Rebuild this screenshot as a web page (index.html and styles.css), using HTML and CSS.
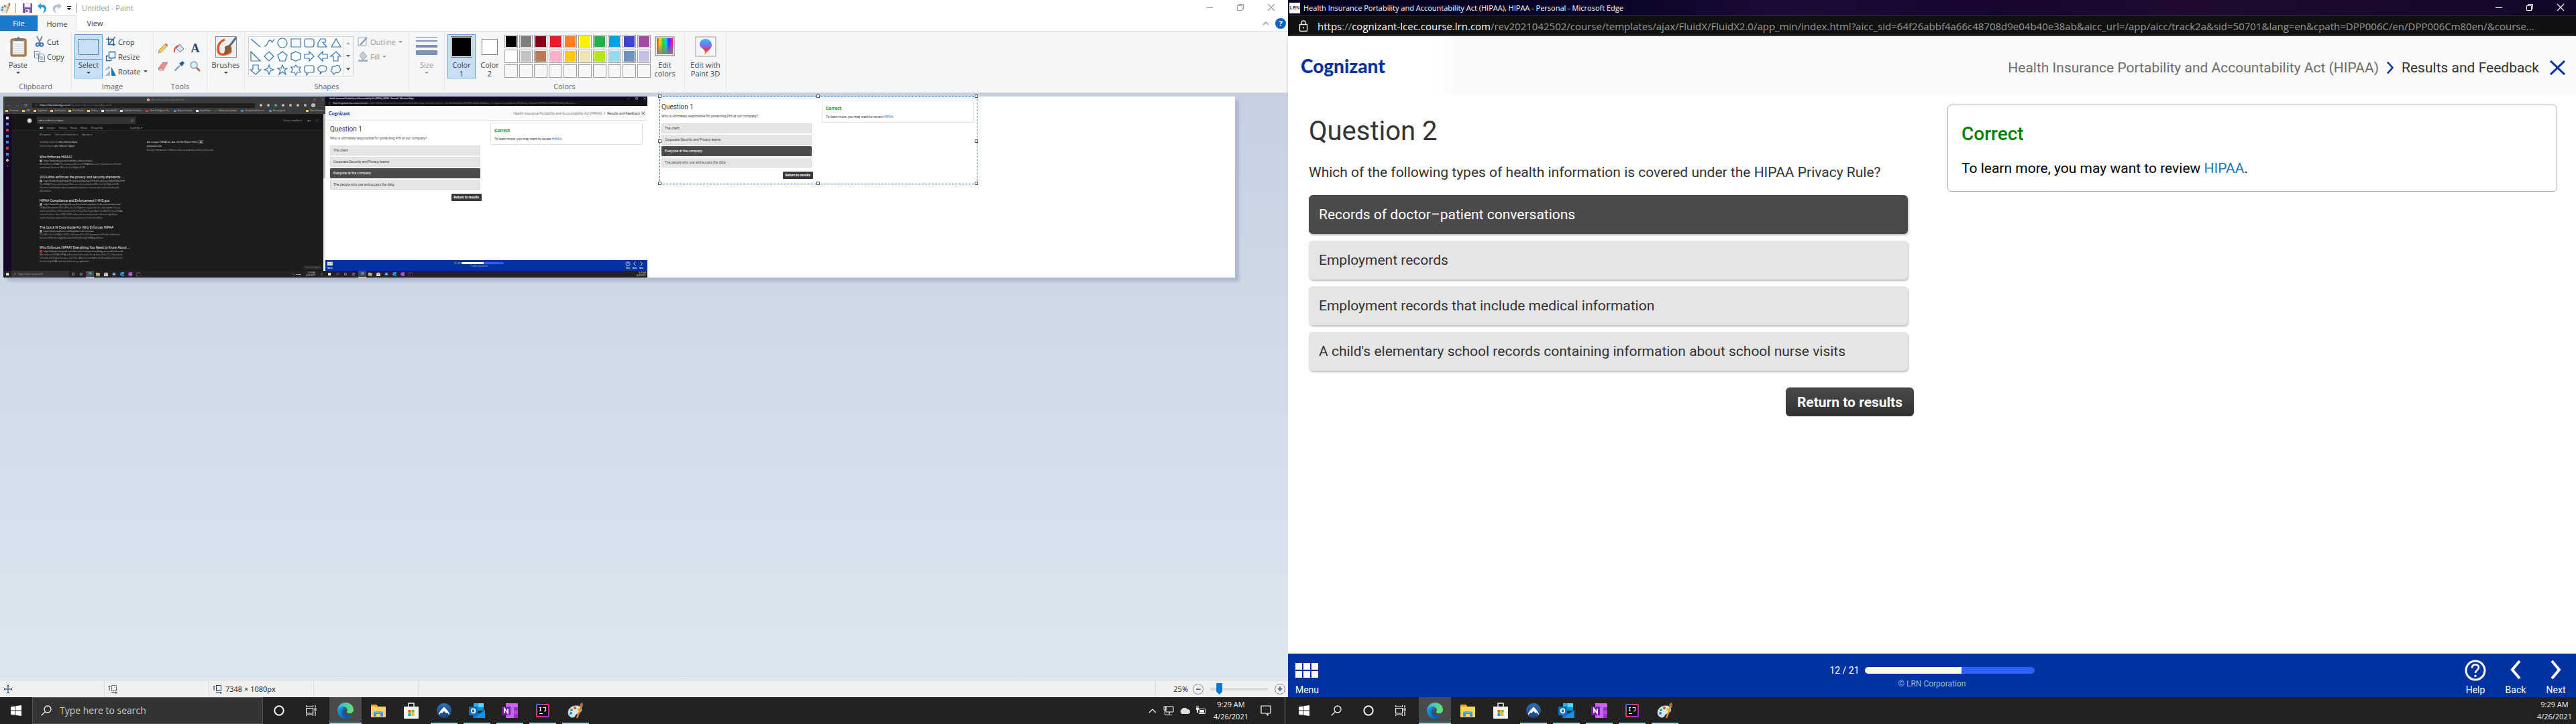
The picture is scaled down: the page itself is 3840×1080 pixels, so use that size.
FILE: index.html
```html
<!DOCTYPE html>
<html lang="en">
<head>
<meta charset="utf-8">
<title>Desktop</title>
<link rel="stylesheet" href="styles.css">
</head>
<body>
<svg class="defs" width="0" height="0" aria-hidden="true">
  <defs>
    <linearGradient id="gEdge" x1="0" y1="0" x2="1" y2="1"><stop offset="0" stop-color="#1b9de2"/><stop offset="1" stop-color="#0c59a4"/></linearGradient>
    <linearGradient id="gEdgeTop" x1="0" y1="0" x2="1" y2="0"><stop offset="0" stop-color="#2ab5ec"/><stop offset="1" stop-color="#66e36a"/></linearGradient>
    <linearGradient id="gRain" x1="0" y1="0" x2="1" y2="0"><stop offset="0" stop-color="#f22"/><stop offset=".2" stop-color="#fd0"/><stop offset=".4" stop-color="#1d2"/><stop offset=".58" stop-color="#0dd"/><stop offset=".75" stop-color="#33f"/><stop offset=".9" stop-color="#e0f"/><stop offset="1" stop-color="#f24"/></linearGradient>
    <linearGradient id="gFade" x1="0" y1="0" x2="0" y2="1"><stop offset=".3" stop-color="#808080" stop-opacity="0"/><stop offset="1" stop-color="#808080"/></linearGradient>
    <linearGradient id="gPin" x1="0" y1="0" x2="0" y2="1"><stop offset="0" stop-color="#1cf"/><stop offset=".45" stop-color="#86e"/><stop offset=".7" stop-color="#e35"/><stop offset="1" stop-color="#fc2"/></linearGradient>
    <linearGradient id="gIj" x1="0" y1="0" x2="1" y2="1"><stop offset="0" stop-color="#1a7cf0"/><stop offset=".45" stop-color="#f5325b"/><stop offset="1" stop-color="#6a3fe0"/></linearGradient>
    <linearGradient id="gNord" x1="0" y1="0" x2="0" y2="1"><stop offset="0" stop-color="#2a6fb5"/><stop offset="1" stop-color="#1d4278"/></linearGradient>
  </defs>
  <symbol id="win" viewBox="0 0 16 16"><path fill="#fff" d="M0 2.3l6.5-.9v6.2H0zM7.3 1.3L16 0v7.6H7.3zM0 8.4h6.5v6.2L0 13.7zM7.3 8.4H16V16l-8.7-1.2z"/></symbol>
  <symbol id="search" viewBox="0 0 16 16"><g fill="none" stroke="currentColor" stroke-width="1.3"><circle cx="10" cy="6" r="5"/><path d="M6.4 9.6L.8 15.2"/></g></symbol>
  <symbol id="cortana" viewBox="0 0 16 16"><circle cx="8" cy="8" r="6.7" fill="none" stroke="#f2f2f2" stroke-width="2"/></symbol>
  <symbol id="taskview" viewBox="0 0 16 16"><g fill="none" stroke="#f2f2f2" stroke-width="1.2"><path d="M.6 4.5h10v7.5H.6zM.6 0v2h10V0M.6 16v-2h10v2M14 0v3.5M14 9v7"/><path d="M13 5h2v2.5h-2z"/></g></symbol>
  <symbol id="edge" viewBox="0 0 24 24"><path fill="url(#gEdge)" d="M0 12C0 20 6 24 12.500 24c4 0 7-1.500 8.800-4.200-5 2.300-11.800-.4-11.800-5.300 0-2.300 1.300-3.900 3-4.700C6 4 0 7.500 0 12z"/><path fill="#0d5cab" d="M8 9.500C5 13 6.500 21 12.500 24c4 0 7-1.500 8.800-4.200.3-.6-.2-1-.8-.7-5 1.500-11-.4-11-5 0-1.500.5-3 2-4z"/><path fill="url(#gEdgeTop)" d="M0 12C.5 5 5.500 0 12 0c7.500 0 12 5.500 12 10.200 0 4-3 6.100-6 6.100-3.500 0-4.500-1.300-4-2.200 1.600-2 1-7.600-5.500-7.600C4.500 6.500 1 8.500 0 12z"/></symbol>
  <symbol id="folder" viewBox="0 0 24 24"><path fill="#e8a519" d="M1 3h8l2 2v4H1z"/><path fill="#ffd45e" d="M1 6h22v16H1z"/><path fill="#3f96dc" d="M5 13h14v8h-4v-4H9v4H5z"/><path fill="#69b8f0" d="M5 13h14v2H5z"/></symbol>
  <symbol id="store" viewBox="0 0 24 24"><path d="M8 7V1h8v6" fill="none" stroke="#eee" stroke-width="1.500"/><path fill="#f4f4f4" d="M1 6h22v17q0 1-1 1H2q-1 0-1-1z"/><path fill="#f25022" d="M7.500 11h4v4h-4z"/><path fill="#7fba00" d="M12.500 11h4v4h-4z"/><path fill="#00a4ef" d="M7.500 16h4v4h-4z"/><path fill="#ffb900" d="M12.500 16h4v4h-4z"/></symbol>
  <symbol id="nord" viewBox="0 0 24 24"><circle cx="12" cy="12" r="11" fill="url(#gNord)"/><path fill="#fff" d="M4 18.500C3.500 16 7 11 12 6.500c5 4.500 8.500 9.500 8 12L16.500 15l-1.500 1-3-3.500L9 16l-1.500-1z"/></symbol>
  <symbol id="outlook" viewBox="0 0 24 24"><path fill="#1490df" d="M7 1h15v11H7z"/><path fill="#28a8ea" d="M7 1h7v6H7z"/><path fill="#50d9ff" d="M14 1h8v6h-8z"/><path fill="#0f6fc0" d="M6 11l9 5 9-5v11q0 1-1 1H6z"/><path fill="#1f8fdc" d="M7 23l17-11v10q0 1-1 1z"/><rect y="6" width="13" height="13" rx="1" fill="#0a6fc2"/><ellipse cx="6.500" cy="12.500" rx="2.800" ry="3.200" fill="none" stroke="#fff" stroke-width="1.800"/></symbol>
  <symbol id="onenote" viewBox="0 0 24 24"><path fill="#ca64ea" d="M6 1h16q2 0 2 2v18q0 2-2 2H6z"/><path fill="#9332bf" d="M18 7h6v5h-6zM18 17h6v4q0 2-2 2h-4z"/><path fill="#ae4bd5" d="M18 12h6v5h-6z"/><rect y="6" width="13" height="13" rx="1" fill="#7719aa"/><path d="M4 16V9l5 7V9" fill="none" stroke="#fff" stroke-width="1.700"/></symbol>
  <symbol id="ij" viewBox="0 0 24 24"><rect x="2" y="2" width="20" height="20" rx="2" fill="url(#gIj)"/><path fill="#0b0b0d" d="M4 4h16v16H4z"/><path d="M7 7.500h3M8.500 7.500v5M7 12.500h3M12.500 7.500h4v4q0 1.300-2.500 1.200M7 16.500h5" fill="none" stroke="#fff" stroke-width="1.200"/></symbol>
  <symbol id="palette" viewBox="0 0 24 24"><path fill="#d3e8f3" stroke="#88a9bb" stroke-width=".6" d="M10 5C4 6 0 11 1 17c1 4 5 6 8 5 3-.9 2-3 4-4.500S22 15 21 10s-6-6-11-5z"/><circle cx="6" cy="11" r="2" fill="#3ba54a"/><circle cx="11" cy="8" r="2" fill="#e2442f"/><circle cx="5" cy="16" r="2" fill="#2e7fd1"/><circle cx="16" cy="10" r="2" fill="#f2c11c"/><path stroke="#e08a2c" stroke-width="2.400" d="M21 5l-7 18"/><path fill="#a8714a" d="M18 5q0-4 4-5 2 3 0 7z"/></symbol>
  <symbol id="wmin" viewBox="0 0 12 12"><path d="M1 6.500h10" stroke="currentColor"/></symbol>
  <symbol id="wmax" viewBox="0 0 12 12"><path d="M1.500 3.500h7v7h-7zM3.500 3.500v-2h7v7h-2" fill="none" stroke="currentColor"/></symbol>
  <symbol id="wclose" viewBox="0 0 12 12"><path d="M1 1l10 10M11 1L1 11" stroke="currentColor" stroke-width="1.100"/></symbol>
  <symbol id="lock" viewBox="0 0 14 18"><path d="M1.500 6.500h11v9q0 1-1 1h-9q-1 0-1-1zM4 6.500V4q0-3 3-3t3 3v2.500" fill="none" stroke="currentColor" stroke-width="1.300"/><circle cx="7" cy="11.500" r="1.100" fill="currentColor"/></symbol>
  <symbol id="chevr" viewBox="0 0 12 20"><path d="M2 1.500L9.500 10 2 18.500" fill="none" stroke="currentColor" stroke-width="2.600"/></symbol>
  <symbol id="chevl" viewBox="0 0 12 20"><path d="M10 1.500L2.500 10 10 18.500" fill="none" stroke="currentColor" stroke-width="2.600"/></symbol>
  <symbol id="cross" viewBox="0 0 24 22"><path d="M1.500 1l21 20M22.500 1l-21 20" stroke="currentColor" stroke-width="3"/></symbol>
  <symbol id="apps" viewBox="0 0 35 23"><path fill="#fff" d="M0 0h10v10H0zM12 0h10v10H12zM24 0h10v10H24zM0 12h10v10H0zM12 12h10v10H12zM24 12h10v10H24z"/></symbol>
  <symbol id="help" viewBox="0 0 32 32"><circle cx="16" cy="16" r="14" fill="none" stroke="#fff" stroke-width="3"/><path d="M11 12.500q0-5 5-5t5 4.500c0 3.500-5 3.500-5 8" fill="none" stroke="#fff" stroke-width="2.600"/><circle cx="16" cy="24.300" r="1.700" fill="#fff"/></symbol>
</svg>

<main class="desktop">
<section class="monitor">
  <header class="p-title">
    <svg class="i16" viewBox="0 0 24 24"><use href="#palette"/></svg><i class="bar"></i>
    <svg class="i16 save" viewBox="0 0 16 16"><path fill="#7d55a8" d="M1 1h14v14H1z"/><path fill="#eef" d="M3.500 1h9v6h-9zM5 10h6v5H5z"/><path fill="#7d55a8" d="M6 11h2v3H6z"/></svg>
    <svg class="i16" viewBox="0 0 16 16"><path fill="#2c9fe0" d="M1 5l5-4.500V3c6-.5 9 3 8 7.500-.5 2.500-3 4.500-6 5 2.500-2 3.500-4 3-6C10.500 7.500 9 6.500 6 7v3z"/></svg>
    <svg class="i16" viewBox="0 0 16 16"><path fill="#b4c1d2" d="M15 5l-5-4.500V3C4 2.500 1 6 2 10.500c.5 2.500 3 4.500 6 5-2.500-2-3.500-4-3-6C5.500 7.500 7 6.500 10 7v3z"/></svg>
    <svg class="i8" viewBox="0 0 8 8"><path d="M1 1h6v1H1zM1 4h6L4 7z"/></svg><i class="bar"></i>
    <span>Untitled - Paint</span>
    <div class="wbtns"><button aria-label="Minimize"><svg class="i12"><use href="#wmin"/></svg></button><button aria-label="Restore"><svg class="i12"><use href="#wmax"/></svg></button><button aria-label="Close"><svg class="i12"><use href="#wclose"/></svg></button></div>
  </header>
  <nav class="tabs">
    <button class="file">File</button><button class="home">Home</button><button class="view">View</button>
    <svg class="i12 collapse" viewBox="0 0 12 12"><path d="M2 8l4-4 4 4" fill="none" stroke="#999" stroke-width="1.500"/></svg>
    <span class="qhelp">?</span>
  </nav>
  <div class="ribbon">
    <section class="grp g-clip"><div class="row">
      <button class="big"><svg class="i32" viewBox="0 0 32 32"><rect x="5" y="4" width="23" height="26" rx="2" fill="#b9803f" stroke="#8a5f2d"/><path fill="#fff" stroke="#aaa" d="M8 7h17v20H8z"/><path d="M10 12h13M10 15h13M10 18h13M10 21h13M10 24h13" stroke="#b9c7dc"/><path fill="#777" d="M10 3h4q2-4 5 0h4v4H10z"/></svg><span>Paste</span><i class="dd"></i></button>
      <div class="col"><button><svg class="i16" viewBox="0 0 16 16"><path d="M4 0l5 10M12 0L7 10" stroke="#7b8896" stroke-width="1.800"/><g fill="none" stroke="#2b6fb3" stroke-width="1.800"><circle cx="5" cy="12.500" r="2.300"/><circle cx="11" cy="12.500" r="2.300"/></g></svg>Cut</button>
      <button><svg class="i16" viewBox="0 0 16 16"><path fill="#fff" stroke="#70808f" d="M.5.500h6l2 2v8h-8zM6.500 4.500h6l3 3v8h-9z"/><path d="M8 9h5M8 11h6M8 13h6M2 4h4M2 6h4" stroke="#6f9bd0"/></svg>Copy</button></div>
    </div><h2>Clipboard</h2></section>
    <section class="grp g-img"><div class="row">
      <button class="big split on"><span class="sel-top"><svg class="i32" viewBox="0 0 32 32"><rect x="1.500" y="4.500" width="29" height="23" fill="none" stroke="#1e5a96" stroke-dasharray="2 1"/></svg></span><span>Select</span><i class="dd"></i></button>
      <div class="col"><button><svg class="i16" viewBox="0 0 16 16"><path d="M4.500 1v11.500H15M1 4.500h11.500V15M12 4l3-3M6 11l5-6" fill="none" stroke="#2b6190" stroke-width="1.300"/></svg>Crop</button>
      <button><svg class="i16" viewBox="0 0 16 16"><path d="M5.500 1.500h9v9h-9zM5.500 7.500h-4v7h7v-4" fill="none" stroke="#2b6190" stroke-width="1.300"/></svg>Resize</button>
      <button><svg class="i16" viewBox="0 0 16 16"><path fill="#a8b5c4" d="M0 15h7V7z"/><path fill="#1f73b8" d="M9 2v13h7z"/><path d="M1 7q0-4 5-4M4 .500L6.500 3 4 5.500" fill="none" stroke="#2b84c8"/></svg>Rotate<i class="dd"></i></button></div>
    </div><h2>Image</h2></section>
    <section class="grp g-tools"><div class="tools">
      <svg class="i16" viewBox="0 0 16 16"><path fill="#f5cf58" stroke="#8b6b2f" stroke-width=".7" d="M1 15l1.500-4.500L12 1l3 3-9.500 9.500z"/><path fill="#c96a55" d="M11 2l1.500-1.500 3 3L14 5z"/></svg>
      <svg class="i16" viewBox="0 0 16 16"><path fill="#d5e3f0" stroke="#5c7895" d="M9 2l6 7-6 5-5-6z"/><path d="M1 14q-1-7 6-10" fill="none" stroke="#d9512c" stroke-width="2"/></svg>
      <b class="tool-a">A</b>
      <svg class="i16" viewBox="0 0 16 16"><path fill="#ee8f8c" stroke="#b45a5a" stroke-width=".7" d="M1 11l7-9h7l-6 10z"/><path fill="#f9c6c2" stroke="#b45a5a" stroke-width=".7" d="M1 11h8v3H2z"/></svg>
      <svg class="i16" viewBox="0 0 16 16"><path d="M1.500 14.500L9 7" stroke="#7d93a8" stroke-width="2"/><path fill="#1c5f9e" d="M8 4l5-4 3 3-4 5z"/></svg>
      <svg class="i16" viewBox="0 0 16 16"><circle cx="6" cy="6" r="5" fill="#d8ecfa" stroke="#8a9cae" stroke-width="1.400"/><path d="M10 10l5 5" stroke="#a36b4f" stroke-width="2.500"/></svg>
    </div><h2>Tools</h2></section>
    <section class="grp g-brush"><div class="row mid">
      <button class="big"><svg class="i32" viewBox="0 0 32 32"><rect x=".5" y=".5" width="31" height="31" fill="#eceff1" stroke="#8b8b8b"/><path d="M14 5Q4 9 4 19t10 8 9-6" fill="none" stroke="#e4542a" stroke-width="3.500"/><path d="M31 2L20 16" stroke="#556b80" stroke-width="3"/><path fill="#8c5a35" d="M22 13q5 6-1 11-5 4-9 3 3-5 2-9t8-5z"/></svg><span>Brushes</span><i class="dd"></i></button>
    </div></section>
    <section class="grp g-shapes"><div class="row">
      <div class="gallery"><svg width="140" height="58" viewBox="0 0 140 58" fill="none" stroke="#3273ab" stroke-width="1.200">
        <path d="M3 3l14 12M23 14c6 0 5-10 9-9s0 8 6-2"/><circle cx="50" cy="9" r="7"/><path d="M63 3h14v12H63z"/><rect x="83" y="3" width="14" height="12" rx="3"/><path d="M103 15V9l4-6h7v5h-4l6 7zM130 3l7 12h-14z"/>
        <path d="M3 22v14h14zM30 22l7 7-7 7-7-7zM50 22l7 5-3 9h-8l-3-9zM70 22l7 3v8l-7 3-7-3v-8zM83 26h7v-4l7 7-7 7v-4h-7zM117 26h-7v-4l-7 7 7 7v-4h7zM126 36v-7h-4l8-7 7 7h-4v7z"/>
        <path d="M6 42h8v7h4l-8 7-8-7h4zM30 42l2 5 5 2-5 2-2 5-2-5-5-2 5-2zM50 42l2 5h5l-4 3 2 6-5-4-5 4 2-6-4-3h5zM70 42l2 3h5l-2 4 2 4h-5l-2 4-2-4h-5l2-4-2-4h5z"/><path d="M85 43h10q2 0 2 2v6q0 2-2 2h-6l-3 4v-4h-1q-2 0-2-2v-6q0-2 2-2zM107 52q-5-2-4-5 2-5 8-4 6 1 5 5-1 5-7 4l-3 4zM125 53c-4-1-3-4-1-5-1-4 3-5 5-4 3-3 7-1 6 2 3 1 2 5 0 5 0 3-4 3-5 2l-4 3z"/>
      </svg><div class="gscroll"><i class="up"></i><i class="dd"></i><i class="dd more"></i></div></div>
      <div class="col off"><button><svg class="i16" viewBox="0 0 16 16"><path d="M1 2h12v12H1z" fill="none" stroke="#9daabb"/><path d="M4 13L14 2" stroke="#8d9db2" stroke-width="2.500"/></svg>Outline<i class="dd"></i></button><button><svg class="i16" viewBox="0 0 16 16"><path fill="#c4cdd9" stroke="#93a1b3" d="M8 1l6 7-6 5-5-6z"/><path fill="#a3b1c3" d="M1 13h14v3H1z"/></svg>Fill<i class="dd"></i></button></div>
    </div><h2>Shapes</h2></section>
    <section class="grp g-size"><div class="row mid">
      <button class="big off"><svg class="i32" viewBox="0 0 32 32" fill="#7f92b4"><path d="M0 1h32v1H0zM0 6h32v2H0zM0 13h32v4H0zM0 21h32v7H0z"/></svg><span>Size</span><i class="dd"></i></button>
    </div></section>
    <section class="grp g-colors"><div class="row">
      <button class="big on"><i class="sw c1"></i><span>Color<br>1</span></button>
      <button class="big"><i class="sw c2"></i><span>Color<br>2</span></button>
      <div class="pal"><i style="background:#000"></i><i style="background:#7f7f7f"></i><i style="background:#880015"></i><i style="background:#ed1c24"></i><i style="background:#ff7f27"></i><i style="background:#fff200"></i><i style="background:#22b14c"></i><i style="background:#00a2e8"></i><i style="background:#3f48cc"></i><i style="background:#a349a4"></i><i style="background:#fff"></i><i style="background:#c3c3c3"></i><i style="background:#b97a57"></i><i style="background:#ffaec9"></i><i style="background:#ffc90e"></i><i style="background:#efe4b0"></i><i style="background:#b5e61d"></i><i style="background:#99d9ea"></i><i style="background:#7092be"></i><i style="background:#c8bfe7"></i><i class="e"></i><i class="e"></i><i class="e"></i><i class="e"></i><i class="e"></i><i class="e"></i><i class="e"></i><i class="e"></i><i class="e"></i><i class="e"></i></div>
      <button class="big"><svg class="i32" viewBox="0 0 32 32"><rect x="2" y="1" width="28" height="28" fill="#fff" stroke="#999" stroke-width="1.500"/><path fill="url(#gRain)" d="M4 3h24v24H4z"/><path fill="url(#gFade)" d="M4 3h24v24H4z"/></svg><span>Edit<br>colors</span></button>
    </div><h2>Colors</h2></section>
    <section class="grp g-3d"><div class="row mid">
      <button class="big"><svg class="i32" viewBox="0 0 32 32"><rect x="1" y="1" width="30" height="29" fill="#f6f6f6" stroke="#bbb" stroke-width="1.500"/><path fill="url(#gPin)" d="M16 4c5 0 9 4 9 9 0 7-7 8-10 15-1-4 1-6-3-9-3-2-5-4-5-7 0-5 4-8 9-8z"/></svg><span>Edit with<br>Paint 3D</span></button>
    </div></section>
  </div>

  <div class="workspace">
    <div class="canvas">
      <!-- pasted capture: search results on the left screen -->
      <div class="shot s1">
        <div class="s1-title"><i class="duck"></i><span>who enforces hipaa at DuckDuckGo</span><div class="s-w"><svg><use href="#wmin"/></svg><svg><use href="#wmax"/></svg><svg><use href="#wclose"/></svg></div></div>
        <div class="s1-bar"><span>←</span><span>→</span><span>⟳</span><div class="s1-url"><svg><use href="#lock"/></svg><b>https://duckduckgo.com</b>/?q=who+inforces+hipaa&amp;ia=web</div><i class="d"></i><i class="d"></i><i class="d g"></i><i class="d"></i><i class="d"></i><i class="d"></i><i class="d"></i><i class="d big-d"></i><span>…</span></div>
        <div class="s1-marks"><span><i></i>Developer</span><span><i></i>GBS</span><span><i></i>Cognizant</span><span><i></i>GoatCopter</span><span><i></i>Bear Recipe</span><span><i></i>Homes</span><span><i class="w"></i>mojombo80</span><span><i class="w"></i>CodeGin: Front En...</span><span><i class="r"></i>How To Engineer Yo...</span><span><i class="b"></i>RxJava Contacts</span><span><i class="w"></i>GraphPaper</span><span><i class="k"></i>Online Java Compil...</span><span><i class="b"></i>Gravity Vault Reserv...</span><span><i class="b"></i>Managegrails</span><span class="last"><i></i>Other favorites</span></div>
        <div class="s1-body">
          <div class="s1-side"><i></i><i class="b"></i><i class="r"></i><i class="b"></i><i class="b"></i><i class="r"></i><i class="b"></i><i class="duck"></i><span>+</span></div>
          <div class="s1-page">
            <div class="s1-head"><i class="logo-d"></i><div class="s1-q"><span>who enforces hipaa</span><svg><use href="#search"/></svg></div><span class="priv">Privacy, simplified. ▾</span><span>◀▪ ▾</span><span>☰</span></div>
            <div class="s1-nav"><b>All</b><span>Images</span><span>Videos</span><span>News</span><span>Maps</span><span>Shopping</span><span class="set">Settings ▾</span></div>
            <div class="s1-filt"><span>All regions ▾</span><span>Safe search: moderate ▾</span><span>Any time ▾</span></div>
            <div class="s1-cols">
              <div class="s1-res">
                <p class="inc">Including results for <b>who enforces hipaa</b><br>Search only for <b>who "inforces" hipaa?</b></p>
                <h3>Who Enforces HIPAA?</h3><cite><i></i>https://www.hipaajournal.com/who-enforces-hipaa/</cite><p>Who Enforces HIPAA? The primary enforcer of HIPAA Rules is the Department of Health<br>and Human Services' Office for Civil Rights (OCR).</p>
                <h3>2019-Who enforces the privacy and security standards ...</h3><cite><i></i>https://www.hhs.gov/hipaa/for-professionals/faq/2019/who-enforces-hipaa/index.html</cite><p>The HIPAA Privacy and Security Rules are enforced by the Office for Civil Rights (OCR).<br>View more information about complaints related to concerns about protected health<br>information.</p>
                <h3>HIPAA Compliance and Enforcement | HHS.gov</h3><cite><i></i>https://www.hhs.gov/hipaa/for-professionals/compliance-enforcement/index.html</cite><p>HIPAA Enforcement. HHS' Office for Civil Rights is responsible for enforcing the Privacy<br>and Security Rules. Enforcement of the Privacy Rule began April 14, 2003 for most HIPAA<br>covered entities. Since 2003, OCR's enforcement activities have obtained significant<br>results that have improved the privacy practices of covered entities.</p>
                <h3>The Quick N' Easy Guide For Who Enforces HIPAA</h3><cite><i></i>https://www.easyllama.com/blog/who-enforces-hipaa</cite><p>The Office for Civil Rights (OCR), a division of the US Department of Health and Human<br>Services (HHS) was originally tasked with enforcing HIPAA guidelines.</p>
                <h3>Who Enforces HIPAA? Everything You Need to Know About ...</h3><cite><i class="r"></i>https://hipaasecuritysuite.com/who-enforces-hipaa-everything-you-need-to-know-ab...</cite><p>Who Enforces HIPAA? HIPAA enforcement falls under the domain of the U.S. Department<br>of Health and Human Services. The HHS' Office for Civil Rights (OCR) handles the process<br>of enforcing HIPAA's privacy and security regulations.</p>
              </div>
              <div class="s1-ad"><b>Ask a Lawyer: HIPAA Law - Ask a Verified Expert Online. <small>AD</small></b><b>justanswer.com</b><span>A Lawyer Will Answer in Minutes! Questions Answered Every 9 Seconds.</span></div>
            </div>
            <span class="share">Share Feedback</span>
          </div>
          <i class="s1-sb"></i>
        </div>
        <div class="s-task"><svg><use href="#win"/></svg><div class="s-find"><svg><use href="#search"/></svg>Type here to search</div><svg><use href="#cortana"/></svg><svg><use href="#taskview"/></svg><svg class="m on"><use href="#edge"/></svg><svg class="m"><use href="#folder"/></svg><svg class="m"><use href="#store"/></svg><svg class="m"><use href="#nord"/></svg><svg class="m"><use href="#outlook"/></svg><svg class="m"><use href="#onenote"/></svg><svg class="m"><use href="#ij"/></svg><span class="s-tray">^ ▭ ☁ ▬</span><span class="s-clock">9:29 AM<br>4/26/2021</span><span class="s-note">▢</span></div>
      </div>
      <!-- pasted capture: course window on the right screen -->
      <div class="shot s2">
        <div class="s2-title">Health Insurance Portability and Accountability Act (HIPAA), HIPAA - Personal - Microsoft Edge<div class="s-w"><svg><use href="#wmin"/></svg><svg><use href="#wmax"/></svg><svg><use href="#wclose"/></svg></div></div>
        <div class="s2-url"><svg><use href="#lock"/></svg><b>https://cognizant-lcec.course.lrn.com</b>/rev2021042502/course/templates/ajax/FluidX/FluidX2.0/app_min/index.html?aicc_sid=64f26abbf4a66c48708d9e04b40e38ab&amp;aicc_url=/app/aicc/track2a&amp;sid=50701&amp;lang=en&amp;cpath=DPP006C/en/DPP006Cm80en/&amp;course...</div>
        <div class="s2-head"><b>Cognizant</b><span class="crumb">Health Insurance Portability and Accountability Act (HIPAA)</span><svg><use href="#chevr"/></svg><span>Results and Feedback</span><svg class="x"><use href="#cross"/></svg></div>
        <div class="mini">
          <div class="mini-q"><h3>Question 1</h3><p>Who is ultimately responsible for protecting PHI at our company?</p><div class="a">The client</div><div class="a">Corporate Security and Privacy teams</div><div class="a sel">Everyone at the company</div><div class="a">The people who use and access the data</div><div class="r">Return to results</div></div>
          <div class="mini-f"><h4>Correct</h4><p>To learn more, you may want to review <span>HIPAA</span>.</p></div>
        </div>
        <div class="s2-foot"><div class="f1"><svg><use href="#apps"/></svg>Menu</div><div class="f2"><div>11 / 21<i></i></div><span>© LRN Corporation</span></div><div class="f1"><svg><use href="#help"/></svg>Help</div><div class="f1"><svg><use href="#chevl"/></svg>Back</div><div class="f1"><svg><use href="#chevr"/></svg>Next</div></div>
        <div class="s-task"><svg><use href="#win"/></svg><svg><use href="#search"/></svg><svg><use href="#cortana"/></svg><svg><use href="#taskview"/></svg><svg class="m on"><use href="#edge"/></svg><svg class="m"><use href="#folder"/></svg><svg class="m"><use href="#store"/></svg><svg class="m"><use href="#nord"/></svg><svg class="m"><use href="#outlook"/></svg><svg class="m"><use href="#onenote"/></svg><svg class="m"><use href="#ij"/></svg><span class="s-clock end">9:29 AM<br>4/26/2021</span></div>
      </div>
      <div class="selection">
        <div class="mini">
          <div class="mini-q"><h3>Question 1</h3><p>Who is ultimately responsible for protecting PHI at our company?</p><div class="a">The client</div><div class="a">Corporate Security and Privacy teams</div><div class="a sel">Everyone at the company</div><div class="a">The people who use and access the data</div><div class="r">Return to results</div></div>
          <div class="mini-f"><h4>Correct</h4><p>To learn more, you may want to review <span>HIPAA</span>.</p></div>
        </div>
        <i class="h h1"></i><i class="h h2"></i><i class="h h3"></i><i class="h h4"></i><i class="h h5"></i><i class="h h6"></i><i class="h h7"></i><i class="h h8"></i>
      </div>
    </div>
  </div>

  <footer class="status">
    <div class="cell"><svg class="i14" viewBox="0 0 14 14"><path d="M7 1v12M1 7h12M5 3l2-2 2 2M5 11l2 2 2-2M3 5L1 7l2 2M11 5l2 2-2 2" fill="none" stroke="#1f3a5f"/></svg></div>
    <div class="cell"><svg class="i14" viewBox="0 0 14 14"><path d="M2 2v7M.500 3.500L2 2l1.500 1.500M5 12.500h8M11.500 11l1.500 1.500-1.500 1.500" fill="none" stroke="#1f3a5f"/><path d="M5.500 1.500h7v8h-7z" fill="none" stroke="#1f3a5f" stroke-dasharray="2 1"/></svg></div>
    <div class="cell"><svg class="i14" viewBox="0 0 14 14"><path d="M2 2v7M.500 3.500L2 2l1.500 1.500M5 12.500h8M11.500 11l1.500 1.500-1.500 1.500M5.500 1.500h7v8h-7z" fill="none" stroke="#1f3a5f"/></svg>7348 × 1080px</div>
    <div class="cell"></div>
    <div class="zoom"><label for="zoom">25%</label><button aria-label="Zoom out">−</button><input id="zoom" type="range" min="0" max="100" value="12"><button aria-label="Zoom in">+</button></div>
  </footer>
  <div class="taskbar">
    <button class="t" aria-label="Start"><svg class="i16"><use href="#win"/></svg></button>
    <label class="find"><svg class="i16"><use href="#search"/></svg><input type="text" placeholder="Type here to search" aria-label="Search"></label>
    <button class="t" aria-label="Cortana"><svg class="i16"><use href="#cortana"/></svg></button>
    <button class="t" aria-label="Task view"><svg class="i16"><use href="#taskview"/></svg></button>
    <div class="run"><button class="t on" aria-label="Edge"><svg class="i24"><use href="#edge"/></svg></button><button class="t" aria-label="Explorer"><svg class="i24"><use href="#folder"/></svg></button><button class="t" aria-label="Store"><svg class="i24"><use href="#store"/></svg></button><button class="t open" aria-label="NordVPN"><svg class="i24"><use href="#nord"/></svg></button><button class="t open" aria-label="Outlook"><svg class="i24"><use href="#outlook"/></svg></button><button class="t open" aria-label="OneNote"><svg class="i24"><use href="#onenote"/></svg></button><button class="t open" aria-label="IntelliJ"><svg class="i24"><use href="#ij"/></svg></button><button class="t open" aria-label="Paint"><svg class="i24"><use href="#palette"/></svg></button></div>
    <div class="tray">
      <svg class="i16" viewBox="0 0 16 16"><path d="M3 11l5-5 5 5" fill="none" stroke="#fff" stroke-width="1.200"/></svg>
      <svg class="i16" viewBox="0 0 16 16"><path d="M4 2h11v8H4zM9 10v4M6 14.500h7M1 2v5h3v-5zM2.500 7v7h3" fill="none" stroke="#fff"/></svg>
      <svg class="i16" viewBox="0 0 16 16"><path fill="#ddd" d="M4 13a4 4 0 01-.5-7A5 5 0 0112 6a3.500 3.500 0 011 7z"/></svg>
      <svg class="i16" viewBox="0 0 16 16"><path d="M5.500 5.500h9v7h-9zM2 1v3M4 1v3" fill="none" stroke="#fff"/><path fill="#fff" d="M7 7h6v4H7zM1 4h4v3H1zM2 7h2v4H2z"/></svg>
    </div>
    <div class="clock">9:29 AM<br>4/26/2021</div>
    <svg class="i16 note" viewBox="0 0 16 16"><path d="M1 1h14v11h-4v3l-3-3H1z" fill="none" stroke="#fff" stroke-width="1.200"/></svg>
    <i class="edge-line"></i>
  </div>
</section>

<section class="monitor">
  <header class="e-title"><b class="fav">LRN</b><span>Health Insurance Portability and Accountability Act (HIPAA), HIPAA - Personal - Microsoft Edge</span>
    <div class="wbtns"><button aria-label="Minimize"><svg class="i12"><use href="#wmin"/></svg></button><button aria-label="Restore"><svg class="i12"><use href="#wmax"/></svg></button><button aria-label="Close"><svg class="i12"><use href="#wclose"/></svg></button></div></header>
  <div class="e-url"><svg width="14" height="18"><use href="#lock"/></svg><div><b>https</b>://<b>cognizant-lcec.course.lrn.com</b>/rev2021042502/course/templates/ajax/FluidX/FluidX2.0/app_min/index.html?aicc_sid=64f26abbf4a66c48708d9e04b40e38ab&amp;aicc_url=/app/aicc/track2a&amp;sid=50701&amp;lang=en&amp;cpath=DPP006C/en/DPP006Cm80en/&amp;course...</div></div>
  <div class="c-head"><strong>Cognizant</strong><nav><a href="#">Health Insurance Portability and Accountability Act (HIPAA)</a><svg width="12" height="20"><use href="#chevr"/></svg><span>Results and Feedback</span><button aria-label="Exit"><svg width="25" height="22"><use href="#cross"/></svg></button></nav></div>
  <div class="c-main">
    <div class="quiz"><h1>Question 2</h1><p>Which of the following types of health information is covered under the HIPAA Privacy Rule?</p>
      <button class="ans sel">Records of doctor–patient conversations</button><button class="ans">Employment records</button><button class="ans">Employment records that include medical information</button><button class="ans">A child's elementary school records containing information about school nurse visits</button>
      <button class="ret">Return to results</button></div>
    <aside class="fb"><h2>Correct</h2><p>To learn more, you may want to review <a href="#">HIPAA</a>.</p></aside>
  </div>
  <footer class="c-foot">
    <button class="menu"><svg width="35" height="23"><use href="#apps"/></svg>Menu</button>
    <div class="prog"><div><span>12 / 21</span><i class="track"><i style="width:57%"></i></i></div><small>© LRN Corporation</small></div>
    <div class="navs"><button><svg width="32" height="32"><use href="#help"/></svg>Help</button><button><svg width="20" height="30" viewBox="0 0 20 30"><path d="M16 2L5 15l11 13" fill="none" stroke="#fff" stroke-width="4"/></svg>Back</button><button><svg width="20" height="30" viewBox="0 0 20 30"><path d="M4 2l11 13L4 28" fill="none" stroke="#fff" stroke-width="4"/></svg>Next</button></div>
  </footer>
  <div class="taskbar">
    <button class="t" aria-label="Start"><svg class="i16"><use href="#win"/></svg></button>
    <button class="t" aria-label="Search"><svg class="i16"><use href="#search"/></svg></button>
    <button class="t" aria-label="Cortana"><svg class="i16"><use href="#cortana"/></svg></button>
    <button class="t" aria-label="Task view"><svg class="i16"><use href="#taskview"/></svg></button>
    <div class="run"><button class="t on" aria-label="Edge"><svg class="i24"><use href="#edge"/></svg></button><button class="t" aria-label="Explorer"><svg class="i24"><use href="#folder"/></svg></button><button class="t" aria-label="Store"><svg class="i24"><use href="#store"/></svg></button><button class="t open" aria-label="NordVPN"><svg class="i24"><use href="#nord"/></svg></button><button class="t open" aria-label="Outlook"><svg class="i24"><use href="#outlook"/></svg></button><button class="t open" aria-label="OneNote"><svg class="i24"><use href="#onenote"/></svg></button><button class="t open" aria-label="IntelliJ"><svg class="i24"><use href="#ij"/></svg></button><button class="t open" aria-label="Paint"><svg class="i24"><use href="#palette"/></svg></button></div>
    <div class="clock end">9:29 AM<br>4/26/2021</div>
  </div>
</section>
</main>
</body>
</html>
```
FILE: styles.css
```css
* { box-sizing: border-box; }
body { margin: 0; font: 11px/13px "Open Sans", "Noto Sans", sans-serif; color: #3c3c3c; }
h1, h2, h3, h4, p { margin: 0; font-weight: 400; }
button { border: 0; padding: 0; margin: 0; background: none; font: inherit; color: inherit; }
svg { display: block; flex: none; }
i { font-style: normal; }
.defs { position: absolute; }
.i8 { width: 8px; height: 8px; }
.i12 { width: 12px; height: 12px; }
.i14 { width: 14px; height: 14px; }
.i16 { width: 16px; height: 16px; }
.i24 { width: 24px; height: 24px; }
.i32 { width: 32px; height: 32px; }

.desktop { display: grid; grid-template-columns: 1fr 1fr; min-height: 100vh; }
.monitor { display: flex; flex-direction: column; min-width: 0; }

/* Paint: title bar and tabs */
.p-title { display: flex; align-items: center; gap: 6px; height: 23px; background: #fff; color: #999; }
.p-title .bar { width: 1px; height: 14px; background: #999; margin: 0 1px; }
.p-title .save { margin-left: 2px; }
.wbtns { display: flex; margin-left: auto; height: 23px; }
.wbtns button { width: 46px; display: flex; justify-content: center; align-items: center; padding-bottom: 2px; }
.p-title .wbtns { margin-right: 2px; }
.tabs { display: flex; height: 24px; background: #fff; border-bottom: 1px solid #dadbdc; align-items: center; }
.tabs button { height: 23px; }
.tabs .file { width: 56px; background: #1979ca; color: #fff; }
.tabs .home { width: 58px; height: 24px; background: #f5f6f7; border: 1px solid #dadbdc; border-bottom: 0; align-self: flex-start; }
.tabs .view { width: 55px; }
.collapse { margin-left: auto; }
.qhelp { width: 16px; height: 16px; margin: 0 3px 0 8px; border-radius: 8px; background: #0a64c0; color: #fff; font-weight: 700; text-align: center; line-height: 16px; }

/* Ribbon */
.ribbon { display: flex; height: 92px; padding: 2px 0 3px; background: #f5f6f7; border-bottom: 1px solid #d2d4d8; }
.grp { display: flex; flex-direction: column; justify-content: space-between; border-right: 1px solid #e2e3e4; padding-top: 2px; }
.grp h2 { font-size: 11px; line-height: 12px; text-align: center; color: #666; }
.row { display: flex; height: 66px; }
.mid { justify-content: center; }
.big { display: flex; flex-direction: column; align-items: center; padding-top: 3px; width: 42px; }
.big > span:not(.sel-top) { margin-top: 4px; white-space: nowrap; }
.big .dd { margin-top: 4px; }
.big.on { background: #c9dff5; outline: 1px solid #62a2e4; outline-offset: -1px; }
.split { padding-top: 0; }
.sel-top { padding: 3px 0 2px; width: 42px; height: 38px; display: flex; justify-content: center; border-bottom: 1px solid #62a2e4; }
.split > span:not(.sel-top) { margin-top: 1px; }
.dd { width: 0; height: 0; border: 3px solid transparent; border-top-color: currentColor; border-bottom: 0; }
.up { width: 0; height: 0; border: 3px solid transparent; border-bottom-color: #aaa; border-top: 0; }
.col button { display: flex; align-items: center; height: 22px; gap: 3px; }
.col .dd { margin-left: 1px; }
.off { color: #999; }
.g-clip { width: 107px; }
.g-clip .row { padding-left: 8px; gap: 5px; }
.g-clip .big { width: 38px; }
.g-img { width: 122px; }
.g-img .row { padding-left: 4px; gap: 4px; }
.g-tools { width: 80px; }
.tools { display: grid; grid-template-columns: repeat(3, 24px); grid-auto-rows: 27px; place-items: center; padding: 7px 0 0 2px; }
.tool-a { font: 700 18px/18px "Liberation Serif", serif; color: #24426b; }
.g-brush { width: 56px; }
.g-shapes { width: 245px; }
.g-shapes .row { padding-left: 5px; gap: 6px; }
.gallery { display: flex; width: 157px; height: 60px; margin-top: 3px; border: 1px solid #cfd0d2; background: #fbfcfd; }
.gscroll { flex: 1; display: flex; flex-direction: column; align-items: center; justify-content: space-around; border-left: 1px solid #dcdddf; background: #f5f6f7; color: #555; }
.more { border-top-width: 4px; }
.g-size { width: 53px; }
.g-colors { width: 358px; }
.g-colors .row { padding-left: 4px; }
.sw { width: 32px; height: 32px; border: 1px solid #7f7f7f; box-shadow: inset 0 0 0 1px #fff; }
.c1 { background: #000; }
.c2 { width: 24px; height: 24px; margin: 4px; background: #fff; }
.pal { display: grid; grid-template-columns: repeat(10, 20px); grid-auto-rows: 20px; gap: 2px; margin: 1px 0 0 1px; }
.pal i { border: 1px solid #a0a0a0; box-shadow: inset 0 0 0 1px #fff; }
.pal .e { box-shadow: none; }
.g-3d { width: 62px; }

/* Paint: drawing area */
.workspace { flex: 1; padding: 5px; background: linear-gradient(#c7d0e1, #dde7f1); }
.canvas { position: relative; display: flex; width: 1836px; height: 270px; background: #fff; box-shadow: 6px 6px 4px #adbbd0; }
.shot { width: 480px; height: 270px; display: flex; flex-direction: column; overflow: hidden; white-space: nowrap; font-size: 3px; line-height: 4px; }
.shot svg { width: 4px; height: 4px; }
.s1 { background: #1c1c1c; color: #aaa; }
.s1-title { display: flex; height: 9px; align-items: center; background: #3b3b3b; color: #888; padding-left: 214px; gap: 2px; }
.duck { width: 4px; height: 4px; border-radius: 2px; background: #de5833; border: 1px solid #eee; }
.s-w { display: flex; gap: 8px; margin-left: auto; padding-right: 2px; }
.s1-bar { display: flex; height: 8px; align-items: center; gap: 7px; background: #3b3b3b; padding: 0 3px 0 5px; font-size: 6px; }
.s1-url { flex: 1; display: flex; align-items: center; height: 7px; background: #202020; font-size: 4px; color: #777; padding-left: 4px; }
.s1-url svg { margin-right: 3px; }
.s1-url b { font-weight: 400; color: #eee; }
.d { width: 4px; height: 4px; border-radius: 2px; background: #bbb; }
.g { background: #15c39a; }
.big-d { width: 6px; height: 6px; border-radius: 3px; }
.s1-marks { display: flex; height: 9px; align-items: center; gap: 5px; background: #3b3b3b; padding: 0 2px 1px 3px; color: #ccc; }
.s1-marks span { display: flex; align-items: center; gap: 2px; }
.s1-marks i { width: 4px; height: 3px; background: #f3c14d; }
.s1-marks .w, .s1-side i { background: #ddd; }
.s1-marks .b, .s1-side .b { background: #3a8fe8; }
.s1-marks .r, .s1-side .r { background: #d23a3a; }
.s1-marks .k { background: #275c36; }
.s1-marks .last { margin-left: auto; }
.s1-body { flex: 1; display: flex; min-height: 0; }
.s1-side { width: 12px; background: #170527; display: flex; flex-direction: column; align-items: center; gap: 5px; padding-top: 4px; font-size: 6px; }
.s1-side i { width: 4px; height: 4px; }
.s1-side .duck { background: #de5833; }
.s1-page { flex: 1; position: relative; }
.s1-head { display: flex; align-items: center; height: 17px; padding: 2px 8px 0 23px; gap: 7px; background: #171717; }
.logo-d { width: 8px; height: 8px; border-radius: 4px; background: #ddd; border: 1px solid #555; }
.s1-q { width: 147px; height: 11px; display: flex; align-items: center; justify-content: space-between; padding: 0 3px; background: #333; color: #ddd; font-size: 4px; }
.priv { margin-left: auto; }
.s1-nav { display: flex; gap: 5px; height: 8px; align-items: center; padding-left: 42px; background: #171717; border-bottom: 1px solid #2b2b2b; font-size: 4px; }
.s1-nav b { color: #fff; }
.set { margin-left: 36px; }
.s1-filt { display: flex; gap: 6px; padding: 4px 0 4px 42px; }
.s1-cols { display: grid; grid-template-columns: 160px 1fr; padding-left: 42px; }
.inc { line-height: 6px; padding: 2px 0 3px; }
.inc b { font-weight: 400; color: #eee; }
.s1-res h3 { margin-top: 8px; font: 5px/6px Roboto, sans-serif; color: #eee; }
.s1-res .inc + h3 { margin-top: 7px; }
.s1-res cite { display: flex; align-items: center; gap: 2px; height: 6px; font-style: normal; color: #ccc; }
.s1-res cite i { width: 4px; height: 4px; background: #888; border-radius: 1px; }
.s1-res cite .r { background: #d22; }
.s1-res p:not(.inc) { line-height: 5px; }
.s1-ad { display: flex; flex-direction: column; line-height: 6px; padding-top: 2px; }
.s1-ad b { font-weight: 400; color: #eee; }
.s1-ad small { font-size: 3px; border: 1px solid #555; }
.share { position: absolute; right: 3px; bottom: 2px; padding: 1px 2px; background: #2a2a2a; color: #777; }
.s1-sb { width: 3px; background: linear-gradient(#bbb 0 96px, #f0f0f0 96px); }
.s-task { display: flex; height: 10px; align-items: center; background: #222; color: #ddd; padding-left: 4px; gap: 8px; }
.s-find { display: flex; align-items: center; gap: 3px; width: 86px; height: 10px; margin: 0 -4px; padding-left: 3px; background: #333; font-size: 4px; color: #bbb; }
.shot .m { width: 6px; height: 6px; margin-right: -2px; }
.shot .m.on { width: 12px; height: 10px; margin: 0 -5px 0 -3px; padding: 2px 3px; background: #4c4a49; border-bottom: 1px solid #76d6f5; }
.s-tray { margin-left: auto; }
.s-clock { text-align: right; }
.s-task .end { margin-left: auto; padding-right: 2px; }
.s-note { padding-right: 4px; }
.s2 { background: #fff; font-family: Roboto, sans-serif; }
.s2-title { display: flex; align-items: center; height: 6px; background: #100625; color: #fff; padding-left: 6px; }
.s2-url { display: flex; align-items: center; height: 8px; background: #111; color: #888; padding-left: 4px; font-family: "Open Sans", sans-serif; }
.s2-url svg { margin-right: 3px; }
.s2-url b { font-weight: 400; color: #fff; }
.s2-head { display: flex; align-items: center; gap: 2px; height: 22px; padding: 0 3px 0 5px; background: #fafafa; border-bottom: 1px solid #e4e4e4; font-size: 5px; }
.s2-head b { font: 900 7px/8px Lato, sans-serif; color: #0033a0; }
.s2-head .crumb { margin-left: auto; color: #777; }
.s2-head svg { color: #0033a0; }
.s2-head .x { width: 6px; height: 6px; }
.mini { display: grid; grid-template-columns: 224fr 227fr; gap: 15px; padding: 3px 7px; align-items: start; font: 5px/6px Roboto, sans-serif; color: #444; white-space: nowrap; }
.s2 .mini { flex: 1; }
.mini-q { display: flex; flex-direction: column; gap: 2px; padding-top: 4px; }
.mini h3 { font-size: 10px; line-height: 12px; color: #333; margin-bottom: 2px; }
.mini-q p { margin-bottom: 6px; }
.mini .a { height: 15px; line-height: 13px; padding-left: 4px; border: 1px solid #dcdcdc; border-radius: 1px; background: #e5e5e5; }
.mini .sel { background: #4a4a4a; border-color: #4a4a4a; color: #fff; }
.mini .r { align-self: flex-end; margin: 4px -2px 0 0; padding: 0 4px; line-height: 11px; background: #383838; color: #fff; font-weight: 700; border-radius: 1px; }
.mini-f { height: 33px; border: 1px solid #e0e0e0; border-radius: 2px; padding: 7px 5px; }
.mini-f h4 { font: 500 7px/8px Roboto, sans-serif; color: #008000; margin-bottom: 5px; }
.mini-f span { color: #1a77b5; }
.s2-foot { display: flex; height: 16px; background: #0033a0; color: #fff; padding: 0 5px 0 3px; font-size: 3px; gap: 2px; }
.f1 { display: flex; flex-direction: column; align-items: center; justify-content: space-evenly; }
.shot .f1 svg { width: 8px; height: 7px; }
.f2 { flex: 1; text-align: center; color: #9fb2e0; padding-top: 3px; }
.f2 div { display: flex; justify-content: center; gap: 2px; color: #fff; }
.f2 i { width: 63px; height: 3px; background: linear-gradient(90deg, #fff 52%, #2962ff 52%); border-radius: 1px; }
.selection { position: absolute; left: 979px; top: 0; width: 472px; height: 130px; outline: 1px dashed #1979ca; background: #fff; border-top: 3px solid #f8f8f8; box-shadow: inset 0 1px #e4e4e4; }
.selection .mini { padding: 3px 4px 3px 2px; }
.h { position: absolute; width: 5px; height: 5px; margin: -3px; border: 1px solid #555; background: #fff; }
.h1, .h4, .h6 { left: 0; }
.h2, .h7 { left: 50%; }
.h3, .h5, .h8 { left: 100%; }
.h1, .h2, .h3 { top: -3px; }
.h4, .h5 { top: 50%; }
.h6, .h7, .h8 { top: 100%; }

/* Paint: status bar */
.status { display: flex; height: 26px; border-top: 1px solid #d5d5d5; background: #f0f0f0; color: #222; padding: 1px 0; }
.cell { display: flex; align-items: center; gap: 5px; width: 156px; padding-left: 5px; border-right: 1px solid #dadada; }
.zoom { display: flex; align-items: center; gap: 7px; margin-left: auto; padding: 0 4px 0 26px; border-left: 1px solid #dadada; }
.zoom button { width: 16px; height: 16px; border: 1px solid #8a8a8a; border-radius: 8px; font: 700 14px/12px "Open Sans", sans-serif; color: #555; }
.zoom input { appearance: none; width: 86px; height: 18px; margin: 0 3px; background: linear-gradient(#d6dbdb, #d6dbdb) center / 100% 4px no-repeat; }
.zoom input::-webkit-slider-thumb { appearance: none; width: 9px; height: 17px; background: #0078d7; clip-path: polygon(0 0, 100% 0, 100% 75%, 50% 100%, 0 75%); }

/* Windows taskbar */
.taskbar { display: flex; height: 40px; background: #232221; color: #f2f2f2; }
.t { display: flex; align-items: center; justify-content: center; width: 48px; height: 40px; }
.run { display: flex; gap: 1px; margin-left: 3px; }
.t.on { background: #4c4a49; box-shadow: inset 0 -2px #76e4f7; }
.open { background: linear-gradient(#76e4f7, #76e4f7) bottom / 40px 2px no-repeat; }
.find { display: flex; align-items: center; gap: 12px; width: 344px; padding-left: 12px; background: #333; border: 1px solid #555; }
.find input { flex: 1; border: 0; padding: 0; background: none; font: 14px/20px "Open Sans", sans-serif; color: #ccc; }
.find input::placeholder { color: #ccc; }
.tray { display: flex; align-items: center; gap: 8px; margin-left: auto; margin-right: 11px; }
.clock { text-align: center; line-height: 18px; padding-top: 2px; }
.clock.end { margin-left: auto; padding-right: 6px; }
.note { align-self: center; margin: 0 20px 0 18px; }
.edge-line { width: 1px; background: #777; margin-right: 4px; }

/* Edge window */
.e-title { display: flex; align-items: center; height: 23px; gap: 5px; padding-left: 2px; color: #fff; background: linear-gradient(90deg, #04011c, #0a0428 25%, #1c0a38 38%, #170530 55%, #200a30 70%, #120728); }
.fav { width: 16px; height: 16px; background: #fff; color: #17468c; font: 700 7px/16px "Liberation Sans", sans-serif; text-align: center; }
.e-url { display: flex; align-items: center; height: 31px; padding: 0 16px; gap: 14px; background: #111; border-top: 1px solid #2e2b38; color: #999; font-size: 15px; line-height: 20px; white-space: nowrap; }
.e-url svg { color: #fff; }
.e-url div { overflow: hidden; }
.e-url b { font-weight: 400; color: #fff; }
.c-head { display: flex; align-items: center; justify-content: space-between; height: 87px; padding: 0 15px 0 19px; background: linear-gradient(90deg, #fff 220px, #fafafa 250px); box-shadow: 0 1px 4px #ccc; font: 21px/26px Roboto, sans-serif; }
.c-head strong { font: 900 28px/32px Lato, sans-serif; color: #0033a0; }
.c-head nav { display: flex; align-items: center; gap: 11px; color: #333; padding-top: 6px; }
.c-head a { color: #6d6d6d; text-decoration: none; }
.c-head svg { color: #0033a0; }
.c-head button { margin-left: 4px; }
.c-main { flex: 1; display: grid; grid-template-columns: 893fr 909fr; gap: 59px; align-items: start; padding: 15px 28px 0 31px; background: #fff; font: 21px/26px Roboto, sans-serif; color: #333; }
.quiz { display: flex; flex-direction: column; gap: 10px; padding-top: 16px; }
.quiz h1 { font-size: 40px; line-height: 48px; }
.quiz p { margin: 14px 0 11px; }
.ans { height: 58px; padding: 0 15px; text-align: left; background: #e5e5e5; border-radius: 6px; box-shadow: 1px 2px 3px #bbb; }
.ans.sel { background: #4a4a4a; color: #fff; }
.ret { align-self: flex-end; height: 43px; margin: 15px -9px 0 0; padding: 0 17px; border-radius: 6px; background: linear-gradient(#4a4a4a, #303030); color: #fff; font-weight: 700; }
.fb { border: 1px solid #aaa; border-radius: 6px; padding: 26px 20px 21px; color: #000; }
.fb h2 { font: 500 28px/34px Roboto, sans-serif; color: #008000; margin-bottom: 21px; }
.fb a { color: #1a77b5; text-decoration: none; }
.c-foot { display: grid; grid-template-columns: 1fr auto 1fr; height: 65px; background: #0033a0; color: #fff; font: 14px/18px Roboto, sans-serif; }
.c-foot button { display: flex; flex-direction: column; align-items: center; justify-content: space-between; height: 54px; margin-top: 9px; width: 60px; }
.menu svg { margin-top: 5px; }
.c-foot .menu { width: 57px; }
.prog { display: flex; flex-direction: column; align-items: center; gap: 2px; padding-top: 16px; }
.prog div { display: flex; align-items: center; gap: 8px; }
.prog small { font-size: 12px; color: #9fb2e0; }
.track { width: 253px; height: 10px; border-radius: 5px; overflow: hidden; background: #2962ff; }
.track i { display: block; height: 10px; background: #fafafa; }
.navs { display: flex; justify-content: flex-end; }
```
